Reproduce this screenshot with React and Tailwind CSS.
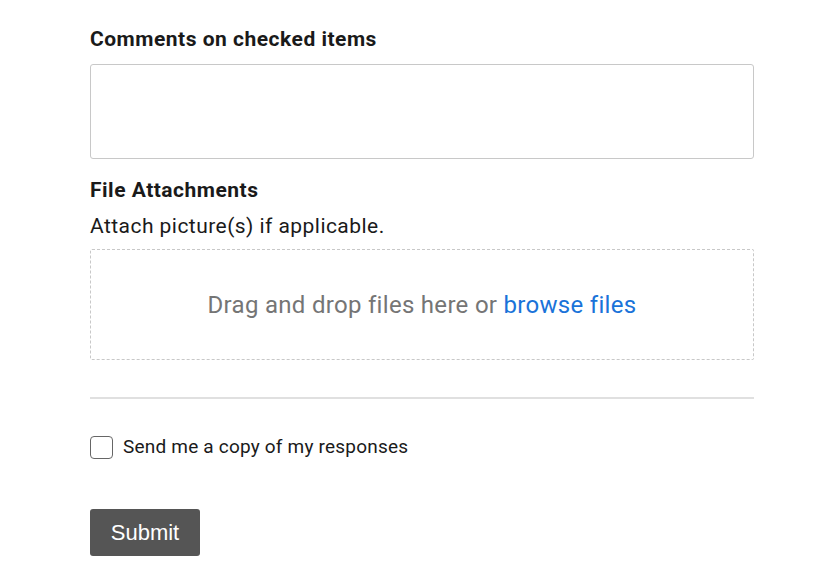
export default function App() {
  return (
    <div className="min-h-[585px] bg-white" style={{ fontFamily: "Roboto, 'Liberation Sans', sans-serif" }}>
      <div className="ml-[90px] w-[664px] pt-[25px]">
        <div className="text-[21px] font-bold leading-[28px] tracking-[0.5px] text-[#1a1a1a]">Comments on checked items</div>
        <div className="mt-[11px] h-[95px] rounded-[3px] border border-[#c8c8c8]"></div>
        <div className="mt-[17px] text-[21px] font-bold leading-[28px] tracking-[0.5px] text-[#1a1a1a]">File Attachments</div>
        <div className="mt-[9px] text-[21px] leading-[26px] tracking-[0.45px] text-[#1a1a1a]">Attach picture(s) if applicable.</div>
        <div className="mt-[10px] flex h-[111px] items-center justify-center rounded-[2px] border border-dashed border-[#c8c8c8] text-[24px] tracking-[0.3px]">
          <span className="text-[#757575]">Drag and drop files here or&nbsp;</span>
          <span className="text-[#1a73d9]">browse files</span>
        </div>
        <div className="mt-[37px] h-[2px] bg-[#e0e0e0]"></div>
        <div className="mt-[35px] flex items-center gap-[10px]">
          <div className="h-[23px] w-[23px] rounded-[4px] border-[1.5px] border-[#666]"></div>
          <span className="text-[19px] leading-[26px] tracking-[0.2px] text-[#1a1a1a]">Send me a copy of my responses</span>
        </div>
        <button
          className="mt-[49px] flex h-[47px] w-[110px] items-center justify-center rounded-[3px] bg-[#555555] text-[22px] text-white"
          style={{ fontFamily: "'Liberation Sans', Arial, sans-serif" }}
        >
          Submit
        </button>
      </div>
    </div>
  );
}
